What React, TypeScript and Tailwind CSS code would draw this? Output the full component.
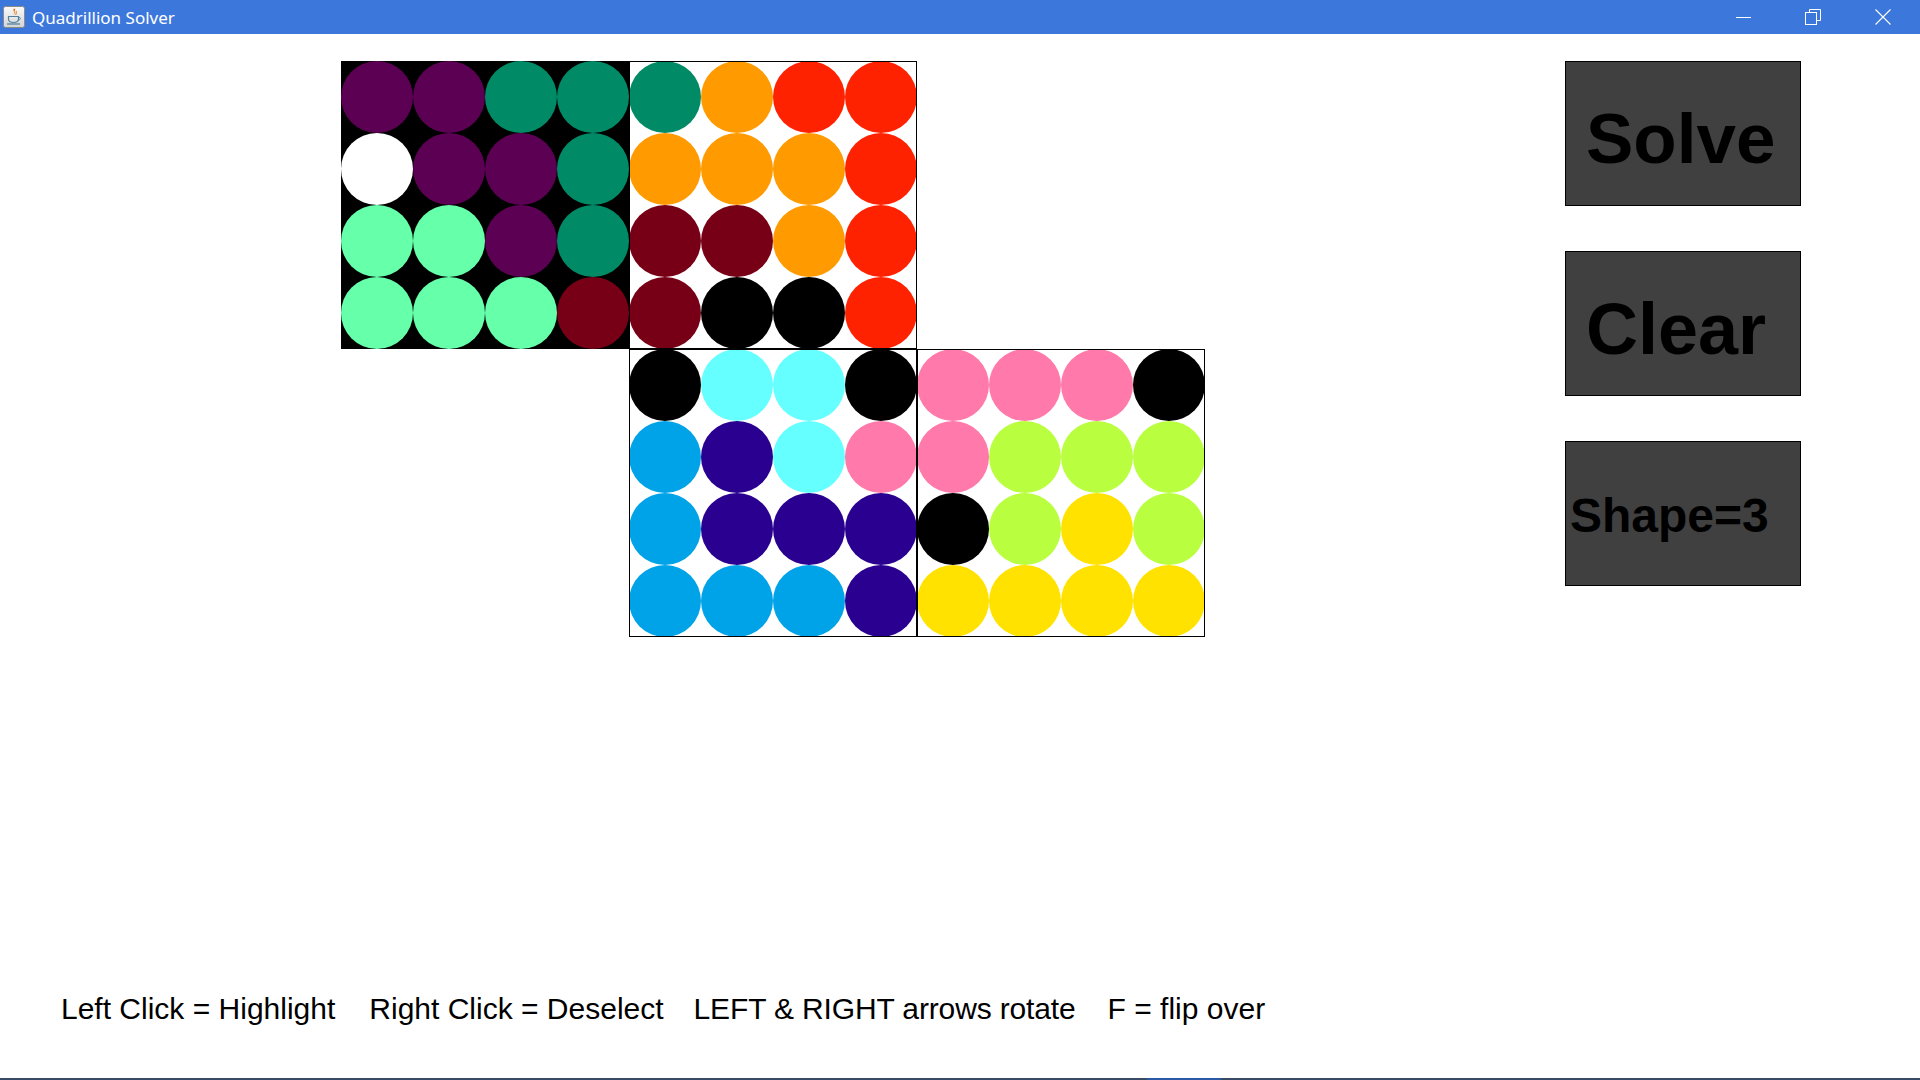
import React from "react";

const colorClass: Record<string, string> = {
  P: "bg-[#5b0053]",
  T: "bg-[#008a66]",
  W: "bg-white",
  M: "bg-[#66ffaa]",
  D: "bg-[#780016]",
  O: "bg-[#ff9b00]",
  R: "bg-[#ff2200]",
  K: "bg-black",
  C: "bg-[#66ffff]",
  S: "bg-[#00a3e8]",
  I: "bg-[#290090]",
  N: "bg-[#ff7aaa]",
  L: "bg-[#b9ff40]",
  Y: "bg-[#ffe200]",
};

const boardA = ["PPTT", "WPPT", "MMPT", "MMMD"];
const boardB = ["TORR", "OOOR", "DDOR", "DKKR"];
const boardC = ["KCCK", "SICN", "SIII", "SSSI"];
const boardD = ["NNNK", "NLLL", "KLYL", "YYYY"];

function Board({ rows, dark }: { rows: string[]; dark?: boolean }) {
  return (
    <div className={`relative grid grid-cols-4 w-[288px] h-[288px] ${dark ? "bg-black" : "bg-white"}`}>
      {rows.flatMap((row, r) =>
        row.split("").map((c, i) => (
          <div key={`${r}-${i}`} className="w-[72px] h-[72px] flex items-center justify-center">
            <div className={`w-[72px] h-[72px] rounded-full ${colorClass[c]}`} />
          </div>
        ))
      )}
      {!dark && <div className="pointer-events-none absolute inset-0 border border-black" />}
    </div>
  );
}

function JavaIcon() {
  return (
    <svg width="22" height="22" viewBox="0 0 22 22">
      <defs>
        <linearGradient id="jg" x1="0" y1="0" x2="0" y2="1">
          <stop offset="0" stopColor="#fafafa" />
          <stop offset="1" stopColor="#d4d4d4" />
        </linearGradient>
      </defs>
      <rect x="0.5" y="0.5" width="21" height="21" rx="2" fill="url(#jg)" stroke="#8a8a8a" />
      <path d="M11 2.5 C9 4.5 12.5 6 10.5 8.5 C13 7 10.5 5 12.5 3.5 Z" fill="#e76f00" />
      <path d="M13.5 5 C12.5 6.5 14 7.5 12.5 9" stroke="#e76f00" strokeWidth="0.9" fill="none" />
      <path d="M5.5 10.5 H15.5 V13 C15.5 15.5 13.5 16.5 10.5 16.5 C7.5 16.5 5.5 15.5 5.5 13 Z" fill="none" stroke="#5382a1" strokeWidth="1.2" />
      <path d="M15.5 11.2 C18 11.2 18 14 15 14.2" fill="none" stroke="#5382a1" strokeWidth="1" />
      <path d="M4 18 H17" stroke="#5382a1" strokeWidth="1.3" />
    </svg>
  );
}

export default function App() {
  return (
    <div className="w-[1920px] h-[1080px] flex flex-col bg-white overflow-hidden">
      {/* Title bar */}
      <div className="h-[34px] bg-[#3c78dc] flex items-center shrink-0">
        <div className="ml-[3px] mt-[-1px] flex items-center">
          <JavaIcon />
        </div>
        <span
          className="ml-[7px] text-white text-[17px] leading-none"
          style={{ fontFamily: '"Segoe UI", "Noto Sans", "Open Sans", sans-serif' }}
        >
          Quadrillion Solver
        </span>
        <div className="ml-auto mr-[2px] flex h-full">
          <div className="w-[70px] h-full flex items-center justify-center">
            <svg width="15" height="15" viewBox="0 0 15 15">
              <path d="M0 7.5 H15" stroke="white" strokeWidth="1" />
            </svg>
          </div>
          <div className="w-[70px] h-full flex items-center justify-center">
            <svg width="16" height="16" viewBox="0 0 16 16">
              <rect x="0.5" y="3.5" width="11" height="12" fill="none" stroke="white" strokeWidth="1" />
              <path d="M4.5 3.5 V0.5 H15.5 V11.5 H11.5" fill="none" stroke="white" strokeWidth="1" />
            </svg>
          </div>
          <div className="w-[70px] h-full flex items-center justify-center">
            <svg width="16" height="16" viewBox="0 0 16 16">
              <path d="M0.5 0.5 L15.5 15.5 M15.5 0.5 L0.5 15.5" stroke="white" strokeWidth="1.1" />
            </svg>
          </div>
        </div>
      </div>

      {/* Content */}
      <div className="flex-1 flex flex-col" style={{ fontFamily: '"Liberation Sans", Arial, sans-serif' }}>
        <div className="flex">
          <div className="ml-[341px] mt-[27px] grid grid-cols-[288px_288px_288px]">
            <Board rows={boardA} dark />
            <Board rows={boardB} />
            <div />
            <div />
            <Board rows={boardC} />
            <Board rows={boardD} />
          </div>
          <div className="ml-[360px] mt-[27px] flex flex-col gap-[45px]">
            <div className="w-[236px] h-[145px] bg-[#404040] border border-black pl-[20px] pt-[41px]">
              <div className="text-[71px] leading-[71px] font-bold text-black">Solve</div>
            </div>
            <div className="w-[236px] h-[145px] bg-[#404040] border border-black pl-[20px] pt-[41px]">
              <div className="text-[72px] leading-[72px] font-bold text-black">Clear</div>
            </div>
            <div className="w-[236px] h-[145px] bg-[#404040] border border-black pl-[4px] pt-[50px]">
              <div className="text-[48px] leading-[48px] font-bold text-black">Shape=3</div>
            </div>
          </div>
        </div>

        <div className="mt-auto mb-[54px] ml-[61px] flex text-[30px] leading-[30px] text-black whitespace-pre">
          <span>Left Click = Highlight</span>
          <span className="ml-[34px]">Right Click = Deselect</span>
          <span className="ml-[30px] tracking-[-0.14px]">LEFT &amp; RIGHT arrows rotate</span>
          <span className="ml-[32px]">F = flip over</span>
        </div>
      </div>

      {/* bottom edge */}
      <div className="h-[2px] shrink-0 bg-[#374b67] flex">
        <div className="ml-[1147px] w-[74px] h-full bg-[#2a5aa6]" />
      </div>
    </div>
  );
}
